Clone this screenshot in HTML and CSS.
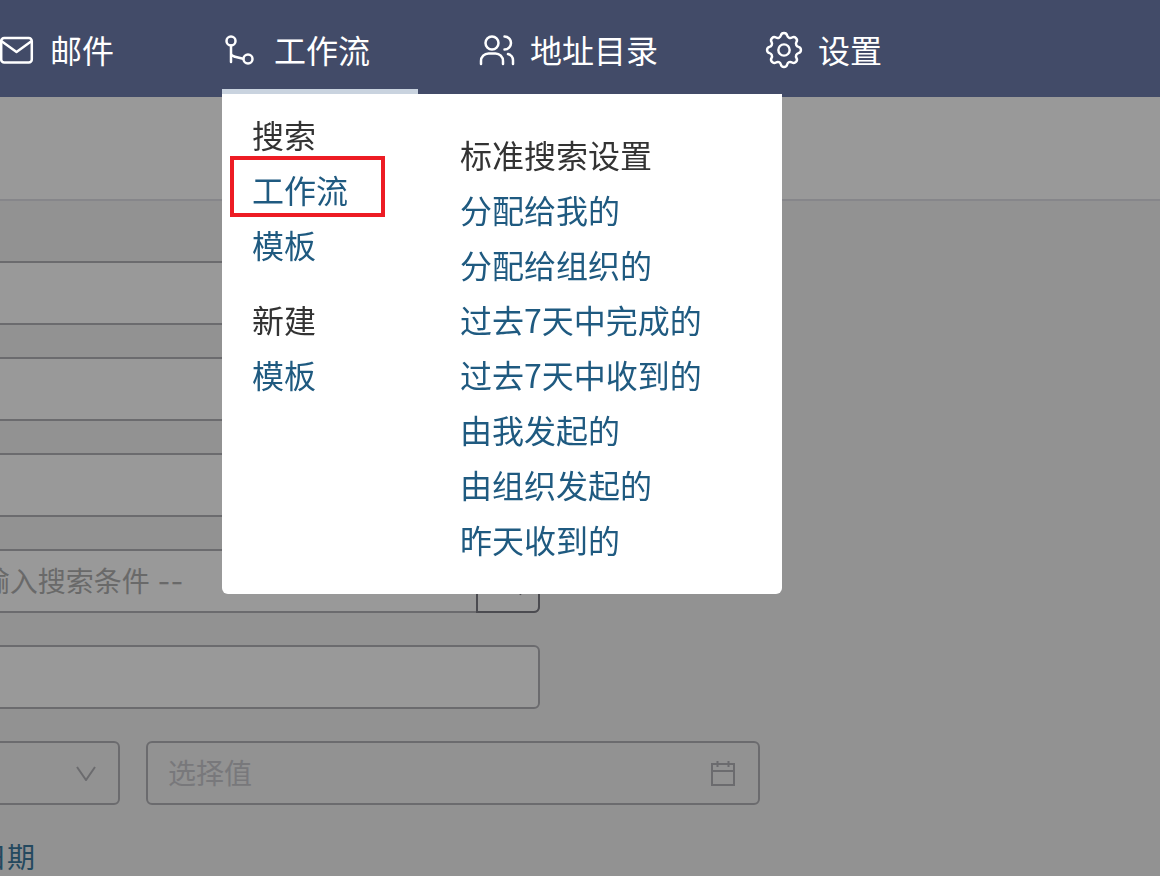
FILE: index.html
```html
<!DOCTYPE html>
<html lang="zh-CN">
<head>
<meta charset="UTF-8">
<meta name="viewport" content="width=device-width, initial-scale=1.0">
<title>工作流</title>
<link rel="stylesheet" href="styles.css">
</head>
<body>
<nav class="topnav">
  <a class="nav-item" href="#">
    <svg class="nav-icon" viewBox="0 0 32 32"><rect x="1.2" y="4" width="30.6" height="24.6" rx="3"/><path d="M2 7.5 16.5 18 31 7.5"/></svg>
    <span>邮件</span>
  </a>
  <a class="nav-item active" href="#">
    <svg class="nav-icon" viewBox="0 0 32 32"><circle cx="7" cy="7" r="4.500"/><path d="M7 11.500V28M7 19.500c0 2 2 2.500 4 3.300l8 2"/><circle cx="24" cy="25" r="4.500"/></svg>
    <span>工作流</span>
  </a>
  <a class="nav-item" href="#">
    <svg class="nav-icon" viewBox="0 0 32 32"><circle cx="12" cy="9" r="6.500"/><path d="M1 30v-3a7.500 7.500 0 0 1 7.500-7.500h7a7.500 7.500 0 0 1 7.500 7.500v3"/><path d="M24.500 2.500a6.500 6.500 0 0 1 0 13M28 20a6.500 6.500 0 0 1 5 6.500V30"/></svg>
    <span>地址目录</span>
  </a>
  <a class="nav-item" href="#">
    <svg class="nav-icon gear" viewBox="3.500 3.500 17 17"><path d="M10.325 4.317c.426-1.756 2.924-1.756 3.350 0a1.724 1.724 0 0 0 2.573 1.066c1.543-.94 3.310.826 2.370 2.370a1.724 1.724 0 0 0 1.065 2.572c1.756.426 1.756 2.924 0 3.350a1.724 1.724 0 0 0-1.066 2.573c.94 1.543-.826 3.310-2.370 2.370a1.724 1.724 0 0 0-2.572 1.065c-.426 1.756-2.924 1.756-3.350 0a1.724 1.724 0 0 0-2.573-1.066c-1.543.94-3.310-.826-2.370-2.370a1.724 1.724 0 0 0-1.065-2.572c-1.756-.426-1.756-2.924 0-3.350a1.724 1.724 0 0 0 1.066-2.573c-.94-1.543.826-3.310 2.370-2.370.996.608 2.296.07 2.572-1.065z"/><circle cx="12" cy="12" r="3"/></svg>
    <span>设置</span>
  </a>

  <div class="dropdown">
    <div class="dropdown-col">
      <div class="dropdown-title">搜索</div>
      <a href="#">工作流</a>
      <a href="#">模板</a>
      <div class="dropdown-title group-gap">新建</div>
      <a href="#">模板</a>
      <div class="callout"></div>
    </div>
    <div class="dropdown-col saved">
      <div class="dropdown-title">标准搜索设置</div>
      <a href="#">分配给我的</a>
      <a href="#">分配给组织的</a>
      <a href="#">过去7天中完成的</a>
      <a href="#">过去7天中收到的</a>
      <a href="#">由我发起的</a>
      <a href="#">由组织发起的</a>
      <a href="#">昨天收到的</a>
    </div>
  </div>
</nav>

<header class="page-head"></header>

<main class="search-form">
  <div class="field"></div>
  <div class="field"></div>
  <div class="field"></div>
  <div class="field input-group">
    <span class="placeholder">-- 请输入搜索条件 --</span>
    <button class="search-btn" type="button">
      <svg viewBox="0 0 24 24"><circle cx="11" cy="11" r="7"/><path d="m16 16 6 6"/></svg>
    </button>
  </div>
  <div class="field"></div>
  <div class="date-row">
    <div class="field plain select-box">
      <svg class="chevron" viewBox="0 0 20 15"><path d="M1 1l9 13 9-13"/></svg>
    </div>
    <div class="field plain date-box">
      <span class="placeholder faint">选择值</span>
      <svg class="calendar" viewBox="0 0 26 26"><path d="M2 4h22v21H2zM2 11h22M7.500 1v6M18.500 1v6"/></svg>
    </div>
  </div>
  <a class="date-link" href="#">到期日期</a>
</main>

<div class="overlay"></div>
</body>
</html>
```

FILE: styles.css
```css
html, body {
  height: 100%;
}

body {
  margin: 0;
  overflow: hidden;
  background-color: #f3f3f3;
  font-family: "Noto Sans CJK SC", "Noto Sans", sans-serif;
  font-size: 32px;
}

a {
  text-decoration: none;
}

/* top bar */
.topnav {
  position: relative;
  z-index: 3;
  display: flex;
  gap: 60px;
  height: 97px;
  margin-left: -2px;
  background-color: #424b68;
}

.nav-item {
  box-sizing: border-box;
  display: flex;
  align-items: center;
  gap: 18px;
  height: 94px;
  padding: 11px 48px 0 2px;
  border-bottom: 5px solid transparent;
  color: #fff;
  line-height: 1;
}

.nav-item span {
  margin-bottom: 3px;
}

.nav-item.active {
  border-bottom-color: #c9d3df;
}

.nav-icon {
  width: 32px;
  height: 32px;
  overflow: visible;
  fill: none;
  stroke: #fff;
  stroke-width: 2.500;
  stroke-linecap: round;
  stroke-linejoin: round;
}

.nav-icon.gear {
  stroke-width: 1.300;
}

/* dropdown */
.dropdown {
  position: absolute;
  left: 224px;
  top: 94px;
  box-sizing: border-box;
  display: flex;
  width: 560px;
  height: 500px;
  padding: 13px 0 0 30px;
  background-color: #fff;
  border-radius: 0 0 6px 6px;
}

.dropdown-col {
  position: relative;
  width: 208px;
  line-height: 55px;
}

.dropdown-col a,
.dropdown-title {
  display: block;
  height: 55px;
  white-space: nowrap;
}

.dropdown-col a {
  color: #1f5a80;
}

.dropdown-title {
  color: #333;
}

.group-gap {
  margin-top: 20px;
}

.saved {
  padding-top: 20px;
}

.callout {
  position: absolute;
  left: -22px;
  top: 49px;
  box-sizing: border-box;
  width: 155px;
  height: 61px;
  border: 4px solid #ed1c24;
}

/* page behind the menu */
.page-head {
  box-sizing: border-box;
  height: 104px;
  background-color: #fff;
  border-bottom: 2px solid #dfdfe6;
}

.search-form {
  display: flex;
  flex-direction: column;
  gap: 32px;
  width: 860px;
  margin-left: -96px;
  padding-top: 60px;
}

.field {
  box-sizing: border-box;
  display: flex;
  align-items: center;
  width: 636px;
  height: 64px;
  background-color: #fff;
  border: 2px solid #b3b3b8;
  border-radius: 6px;
}

.field.plain {
  background-color: transparent;
}

.placeholder {
  flex: 1;
  margin-bottom: 2px;
  padding-left: 14px;
  font-family: Inter, "Noto Sans CJK SC", sans-serif;
  font-size: 28px;
  color: #b0b0b0;
  white-space: nowrap;
}

.placeholder.faint {
  padding-left: 20px;
  color: #c9c9ce;
}

.search-btn {
  display: flex;
  align-items: center;
  justify-content: center;
  width: 64px;
  height: 64px;
  margin: -2px;
  padding: 0;
  background-color: transparent;
  border: 2px solid #7d7d85;
  border-radius: 0 6px 6px 0;
}

.search-btn svg {
  width: 32px;
  height: 32px;
  fill: none;
  stroke: #7d7d85;
  stroke-width: 2;
}

.date-row {
  display: flex;
  gap: 26px;
}

.select-box {
  justify-content: flex-end;
  width: 216px;
  padding-right: 22px;
}

.chevron {
  width: 20px;
  height: 15px;
  fill: none;
  stroke: #b3b3b8;
  stroke-width: 2;
}

.date-box {
  width: 614px;
  padding-right: 22px;
}

.calendar {
  width: 26px;
  height: 26px;
  fill: none;
  stroke: #b3b3b8;
  stroke-width: 2;
}

.date-link {
  padding-left: 19px;
  font-size: 28px;
  line-height: 38px;
  color: #3d7a9e;
}

/* dims everything but the top bar */
.overlay {
  position: fixed;
  inset: 0;
  z-index: 2;
  background-color: rgba(0, 0, 0, 0.4);
}
```
